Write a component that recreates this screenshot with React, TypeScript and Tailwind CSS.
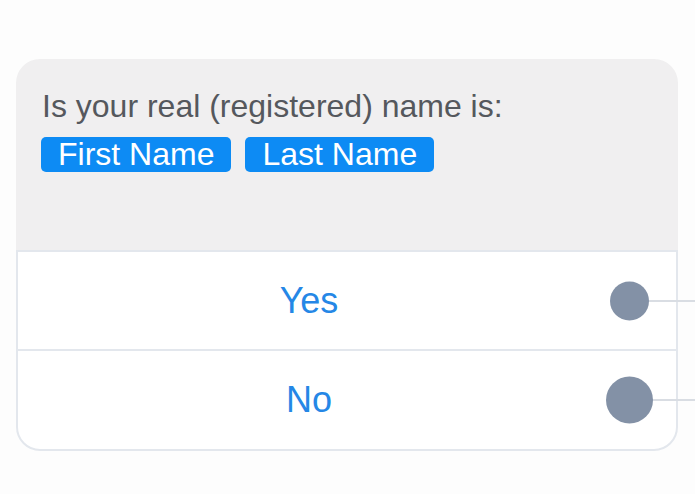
export default function App() {
  const options = [
    { label: "Yes", dot: "w-[39px] h-[39px] right-[27px]", row: "h-[97px]" },
    { label: "No", dot: "w-[47px] h-[47px] right-[23px]", row: "h-[100px] border-t-2 border-[#e3e7ed]" },
  ];

  return (
    <div className="w-[695px] h-[494px] bg-[#fdfdfd] overflow-hidden font-['Liberation_Sans',Arial,sans-serif]">
      <div className="pt-[59px] pl-[16px] w-[678px]">
        {/* question header */}
        <div className="bg-[#f0eff0] rounded-t-[24px] h-[191px] pl-[26px] pr-[24px] pt-[29px]">
          <p className="text-[32px] leading-[36px] text-[#55585d]">
            Is your real (registered) name is:
          </p>
          <div className="flex gap-[14px] mt-[13px] -ml-[1px]">
            <span className="bg-[#0d8bf4] text-white text-[32px] leading-[35px] px-[17px] rounded-[5px]">
              First Name
            </span>
            <span className="bg-[#0d8bf4] text-white text-[32px] leading-[35px] px-[17px] rounded-[5px]">
              Last Name
            </span>
          </div>
        </div>

        {/* answers */}
        <div className="border-2 border-[#e3e7ed] rounded-b-[24px] bg-white">
          {options.map((o) => (
            <div key={o.label} className={`relative ${o.row} flex items-center justify-center pr-[76px]`}>
              <span className="text-[36px] text-[#2587e6]">{o.label}</span>
              <div className="absolute left-[612px] top-1/2 -translate-y-1/2 w-[80px] h-[2px] bg-[#d9dde3]" />
              <div className={`absolute top-1/2 -translate-y-1/2 ${o.dot} rounded-full bg-[#8391a6]`} />
            </div>
          ))}
        </div>
      </div>
    </div>
  );
}
